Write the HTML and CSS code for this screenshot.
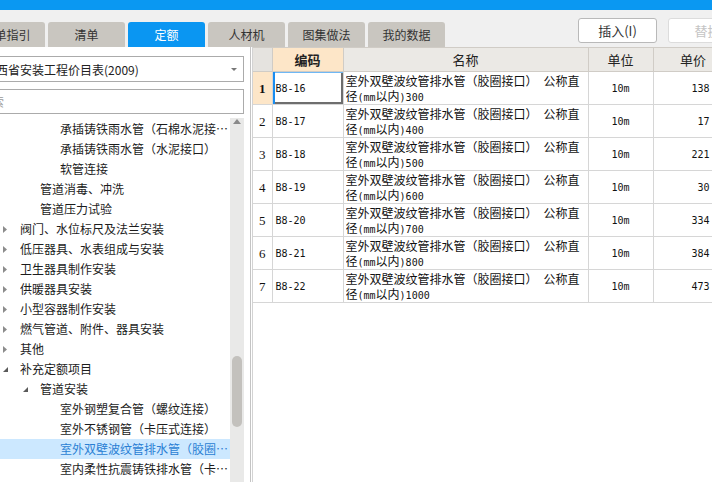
FILE: index.html
```html
<!DOCTYPE html>
<html lang="zh-CN">
<head>
<meta charset="utf-8">
<title>定额</title>
<link rel="stylesheet" href="styles.css">
</head>
<body>
<div class="topbar"></div>
<div class="toolbar">
  <div class="tabs">
    <div class="tab">清单指引</div>
    <div class="tab">清单</div>
    <div class="tab active">定额</div>
    <div class="tab">人材机</div>
    <div class="tab">图集做法</div>
    <div class="tab">我的数据</div>
  </div>
  <div class="actions">
    <button class="btn">插入(I)</button>
    <button class="btn disabled">替换</button>
  </div>
</div>
<div class="main">
  <aside class="left">
    <div class="select">
      <span class="select-text">西省安装工程价目表(2009)</span>
      <svg class="caret" width="6" height="3" viewBox="0 0 6 3"><polygon points="0,0 6,0 3,3" fill="#777"/></svg>
    </div>
    <div class="search">搜索</div>
    <div class="tree-wrap">
      <ul class="tree">
        <li class="node l2"><span class="label">承插铸铁雨水管（石棉水泥接口）</span></li>
        <li class="node l2"><span class="label">承插铸铁雨水管（水泥接口）</span></li>
        <li class="node l2"><span class="label">软管连接</span></li>
        <li class="node l1"><span class="label">管道消毒、冲洗</span></li>
        <li class="node l1"><span class="label">管道压力试验</span></li>
        <li class="node"><span class="twisty"><svg width="4" height="7" viewBox="0 0 4 7"><polygon points="0,0 4,3.5 0,7" fill="#8c8c8c"/></svg></span><span class="label">阀门、水位标尺及法兰安装</span></li>
        <li class="node"><span class="twisty"><svg width="4" height="7" viewBox="0 0 4 7"><polygon points="0,0 4,3.5 0,7" fill="#8c8c8c"/></svg></span><span class="label">低压器具、水表组成与安装</span></li>
        <li class="node"><span class="twisty"><svg width="4" height="7" viewBox="0 0 4 7"><polygon points="0,0 4,3.5 0,7" fill="#8c8c8c"/></svg></span><span class="label">卫生器具制作安装</span></li>
        <li class="node"><span class="twisty"><svg width="4" height="7" viewBox="0 0 4 7"><polygon points="0,0 4,3.5 0,7" fill="#8c8c8c"/></svg></span><span class="label">供暖器具安装</span></li>
        <li class="node"><span class="twisty"><svg width="4" height="7" viewBox="0 0 4 7"><polygon points="0,0 4,3.5 0,7" fill="#8c8c8c"/></svg></span><span class="label">小型容器制作安装</span></li>
        <li class="node"><span class="twisty"><svg width="4" height="7" viewBox="0 0 4 7"><polygon points="0,0 4,3.5 0,7" fill="#8c8c8c"/></svg></span><span class="label">燃气管道、附件、器具安装</span></li>
        <li class="node"><span class="twisty"><svg width="4" height="7" viewBox="0 0 4 7"><polygon points="0,0 4,3.5 0,7" fill="#8c8c8c"/></svg></span><span class="label">其他</span></li>
        <li class="node"><span class="twisty"><svg width="5" height="5" viewBox="0 0 5 5"><polygon points="5,0 5,5 0,5" fill="#5a5a5a"/></svg></span><span class="label">补充定额项目</span></li>
        <li class="node l1"><span class="twisty"><svg width="5" height="5" viewBox="0 0 5 5"><polygon points="5,0 5,5 0,5" fill="#5a5a5a"/></svg></span><span class="label">管道安装</span></li>
        <li class="node l2"><span class="label">室外钢塑复合管（螺纹连接）</span></li>
        <li class="node l2"><span class="label">室外不锈钢管（卡压式连接）</span></li>
        <li class="node l2 sel"><span class="label">室外双壁波纹管排水管（胶圈接口）</span></li>
        <li class="node l2"><span class="label">室内柔性抗震铸铁排水管（卡箍连接）</span></li>
      </ul>
      <div class="vscroll">
        <svg class="up" width="8" height="5" viewBox="0 0 8 5"><polygon points="0,5 4,0 8,5" fill="#8a8a8a"/></svg>
        <div class="thumb"></div>
      </div>
    </div>
  </aside>
  <section class="right">
    <div class="grid-box">
      <table class="grid">
        <colgroup>
          <col class="c-no"><col class="c-code"><col class="c-name"><col class="c-unit"><col class="c-price">
        </colgroup>
        <thead>
          <tr class="hr">
            <th class="no"></th>
            <th class="hl">编码</th>
            <th>名称</th>
            <th>单位</th>
            <th>单价</th>
          </tr>
        </thead>
        <tbody>
          <tr class="r">
            <td class="no cur"><b>1</b></td>
            <td class="code focus">B8-16</td>
            <td class="name"><div class="nm"><div class="ln">室外双壁波纹管排水管（胶圈接口）<span class="m"> </span>公称直</div><div class="ln">径<span class="m">(mm</span>以内<span class="m">)300</span></div></div></td>
            <td class="unit">10m</td>
            <td class="price">138</td>
          </tr>
          <tr class="r">
            <td class="no">2</td>
            <td class="code">B8-17</td>
            <td class="name"><div class="nm"><div class="ln">室外双壁波纹管排水管（胶圈接口）<span class="m"> </span>公称直</div><div class="ln">径<span class="m">(mm</span>以内<span class="m">)400</span></div></div></td>
            <td class="unit">10m</td>
            <td class="price">17</td>
          </tr>
          <tr class="r">
            <td class="no">3</td>
            <td class="code">B8-18</td>
            <td class="name"><div class="nm"><div class="ln">室外双壁波纹管排水管（胶圈接口）<span class="m"> </span>公称直</div><div class="ln">径<span class="m">(mm</span>以内<span class="m">)500</span></div></div></td>
            <td class="unit">10m</td>
            <td class="price">221</td>
          </tr>
          <tr class="r">
            <td class="no">4</td>
            <td class="code">B8-19</td>
            <td class="name"><div class="nm"><div class="ln">室外双壁波纹管排水管（胶圈接口）<span class="m"> </span>公称直</div><div class="ln">径<span class="m">(mm</span>以内<span class="m">)600</span></div></div></td>
            <td class="unit">10m</td>
            <td class="price">30</td>
          </tr>
          <tr class="r">
            <td class="no">5</td>
            <td class="code">B8-20</td>
            <td class="name"><div class="nm"><div class="ln">室外双壁波纹管排水管（胶圈接口）<span class="m"> </span>公称直</div><div class="ln">径<span class="m">(mm</span>以内<span class="m">)700</span></div></div></td>
            <td class="unit">10m</td>
            <td class="price">334</td>
          </tr>
          <tr class="r">
            <td class="no">6</td>
            <td class="code">B8-21</td>
            <td class="name"><div class="nm"><div class="ln">室外双壁波纹管排水管（胶圈接口）<span class="m"> </span>公称直</div><div class="ln">径<span class="m">(mm</span>以内<span class="m">)800</span></div></div></td>
            <td class="unit">10m</td>
            <td class="price">384</td>
          </tr>
          <tr class="r">
            <td class="no">7</td>
            <td class="code">B8-22</td>
            <td class="name"><div class="nm"><div class="ln">室外双壁波纹管排水管（胶圈接口）<span class="m"> </span>公称直</div><div class="ln">径<span class="m">(mm</span>以内<span class="m">)1000</span></div></div></td>
            <td class="unit">10m</td>
            <td class="price">473</td>
          </tr>
        </tbody>
      </table>
    </div>
  </section>
</div>
</body>
</html>
```

FILE: styles.css
```css
html, body {
  margin: 0;
  width: 712px;
  height: 482px;
  overflow: hidden;
}
body {
  font-family: "Noto Sans CJK SC", "Noto Sans", sans-serif;
  font-size: 12px;
  color: #1a1a1a;
  background: #fff;
}

/* top */
.topbar {
  height: 10px;
  background: #0a98f2;
}
.toolbar {
  display: flex;
  height: 37px;
  background: #f0f0f0;
  overflow: hidden;
}
.tabs {
  display: flex;
  gap: 3px;
  margin-left: -32px;
  align-self: flex-end;
}
.tab {
  flex: none;
  width: 77px;
  height: 25px;
  line-height: 25px;
  text-align: center;
  background: #c9c6c0;
  border-radius: 3px 3px 0 0;
  color: #333;
  font-size: 12px;
}
.tab.active {
  background: #0a96f2;
  color: #fff;
}
.actions {
  display: flex;
  gap: 11px;
  margin: 8px 0 0 133px;
  align-self: flex-start;
}
.btn {
  flex: none;
  width: 79px;
  height: 25px;
  padding: 0;
  border: 1px solid #b9b9b9;
  border-radius: 3px;
  background: #fff;
  font: 13px/23px "Noto Sans CJK SC", sans-serif;
  color: #333;
}
.btn.disabled {
  border-color: #dcdcdc;
  color: #c4c4c4;
}

/* main */
.main {
  display: flex;
  height: 435px;
}
.left {
  flex: none;
  width: 250px;
  border-right: 1px solid #c4c4c4;
  display: flex;
  flex-direction: column;
  overflow: hidden;
}
.select {
  flex: none;
  height: 26px;
  margin: 9px 6px 0 -10px;
  padding: 0 6px 0 5px;
  box-sizing: border-box;
  border: 1px solid #ababab;
  display: flex;
  align-items: center;
}
.select-text {
  flex: 1;
  font-size: 12px;
  color: #222;
  white-space: nowrap;
}
.caret {
  flex: none;
}
.search {
  flex: none;
  height: 25px;
  margin: 7px 6px 0 -10px;
  box-sizing: border-box;
  border: 1px solid #ababab;
  line-height: 23px;
  text-indent: -11px;
  color: #9a9a9a;
  font-size: 12px;
  overflow: hidden;
}
.tree-wrap {
  flex: 1;
  min-height: 0;
  display: flex;
  margin-top: 4px;
}
.tree {
  flex: none;
  width: 230px;
  list-style: none;
  margin: 0;
  padding: 1px 0 0;
}
.node {
  height: 20px;
  line-height: 20px;
  display: flex;
  align-items: center;
  white-space: nowrap;
}
.node.l1 { padding-left: 20px; }
.node.l2 { padding-left: 40px; }
.node .label:first-child { margin-left: 20px; }
.twisty {
  flex: none;
  width: 20px;
  height: 20px;
  box-sizing: border-box;
  padding-left: 3px;
  display: flex;
  align-items: center;
}
.label {
  flex: 1;
  min-width: 0;
  overflow: hidden;
  text-overflow: ellipsis;
  color: #1c1c1c;
}
.node.sel {
  background: #cce8ff;
}
.node.sel .label {
  color: #2a7fd4;
}
.vscroll {
  flex: none;
  width: 14px;
  background: #e9e9e8;
  display: flex;
  flex-direction: column;
  align-items: center;
}
.up {
  margin-top: 1px;
}
.thumb {
  width: 10px;
  height: 71px;
  margin-top: 232px;
  border-radius: 5px;
  background: #c3c1bd;
}

/* grid */
.right {
  flex: 1;
  min-width: 0;
  padding-left: 1px;
  overflow: hidden;
}
.grid-box {
  height: 100%;
  border-left: 1px solid #d3d3d3;
}
.grid {
  border-collapse: collapse;
  table-layout: fixed;
  width: 480px;
}
.c-no { width: 19px; }
.c-code { width: 71px; }
.c-name { width: 245px; }
.c-unit { width: 65px; }
.c-price { width: 80px; }
.hr { height: 24px; }
th {
  padding: 0;
  height: 23px;
  background: #ebe9e5;
  border: 1px solid #d0ccc6;
  font-weight: normal;
  font-size: 13px;
  line-height: 16px;
  color: #222;
  white-space: nowrap;
  overflow: hidden;
}
th:first-child, td:first-child {
  border-left: 0;
}
th.no { background: #e5e3df; }
th.hl {
  background: #fde6c8;
  font-weight: bold;
}
td {
  padding: 0;
  height: 32px;
  border: 1px solid #d6d6d6;
  vertical-align: middle;
  color: #111;
  white-space: nowrap;
  overflow: hidden;
  line-height: 15px;
}
td.no {
  text-align: center;
  font-family: "Liberation Serif", serif;
  font-size: 13px;
}
td.no.cur { background: #fde6c8; }
td.code {
  padding-left: 3px;
  font-family: "DejaVu Sans Mono", monospace;
  font-size: 10px;
}
td.focus {
  box-shadow: inset 2px 0 0 #1a8df0, inset 0 1px 0 #6fb8f5, inset -2px -2px 0 #6e6e6e;
}
td.name {
  padding-left: 2px;
  font-size: 12px;
}
.nm {
  height: 32px;
  box-sizing: border-box;
  padding-top: 1px;
  overflow: hidden;
}
.ln {
  height: 15px;
  line-height: 15px;
}
.m {
  font-family: "DejaVu Sans Mono", monospace;
  font-size: 10px;
  line-height: 15px;
}
td.unit {
  text-align: center;
  font-family: "DejaVu Sans Mono", monospace;
  font-size: 10px;
}
td.price {
  text-align: right;
  padding-right: 23px;
  font-family: "DejaVu Sans Mono", monospace;
  font-size: 10px;
}
```
